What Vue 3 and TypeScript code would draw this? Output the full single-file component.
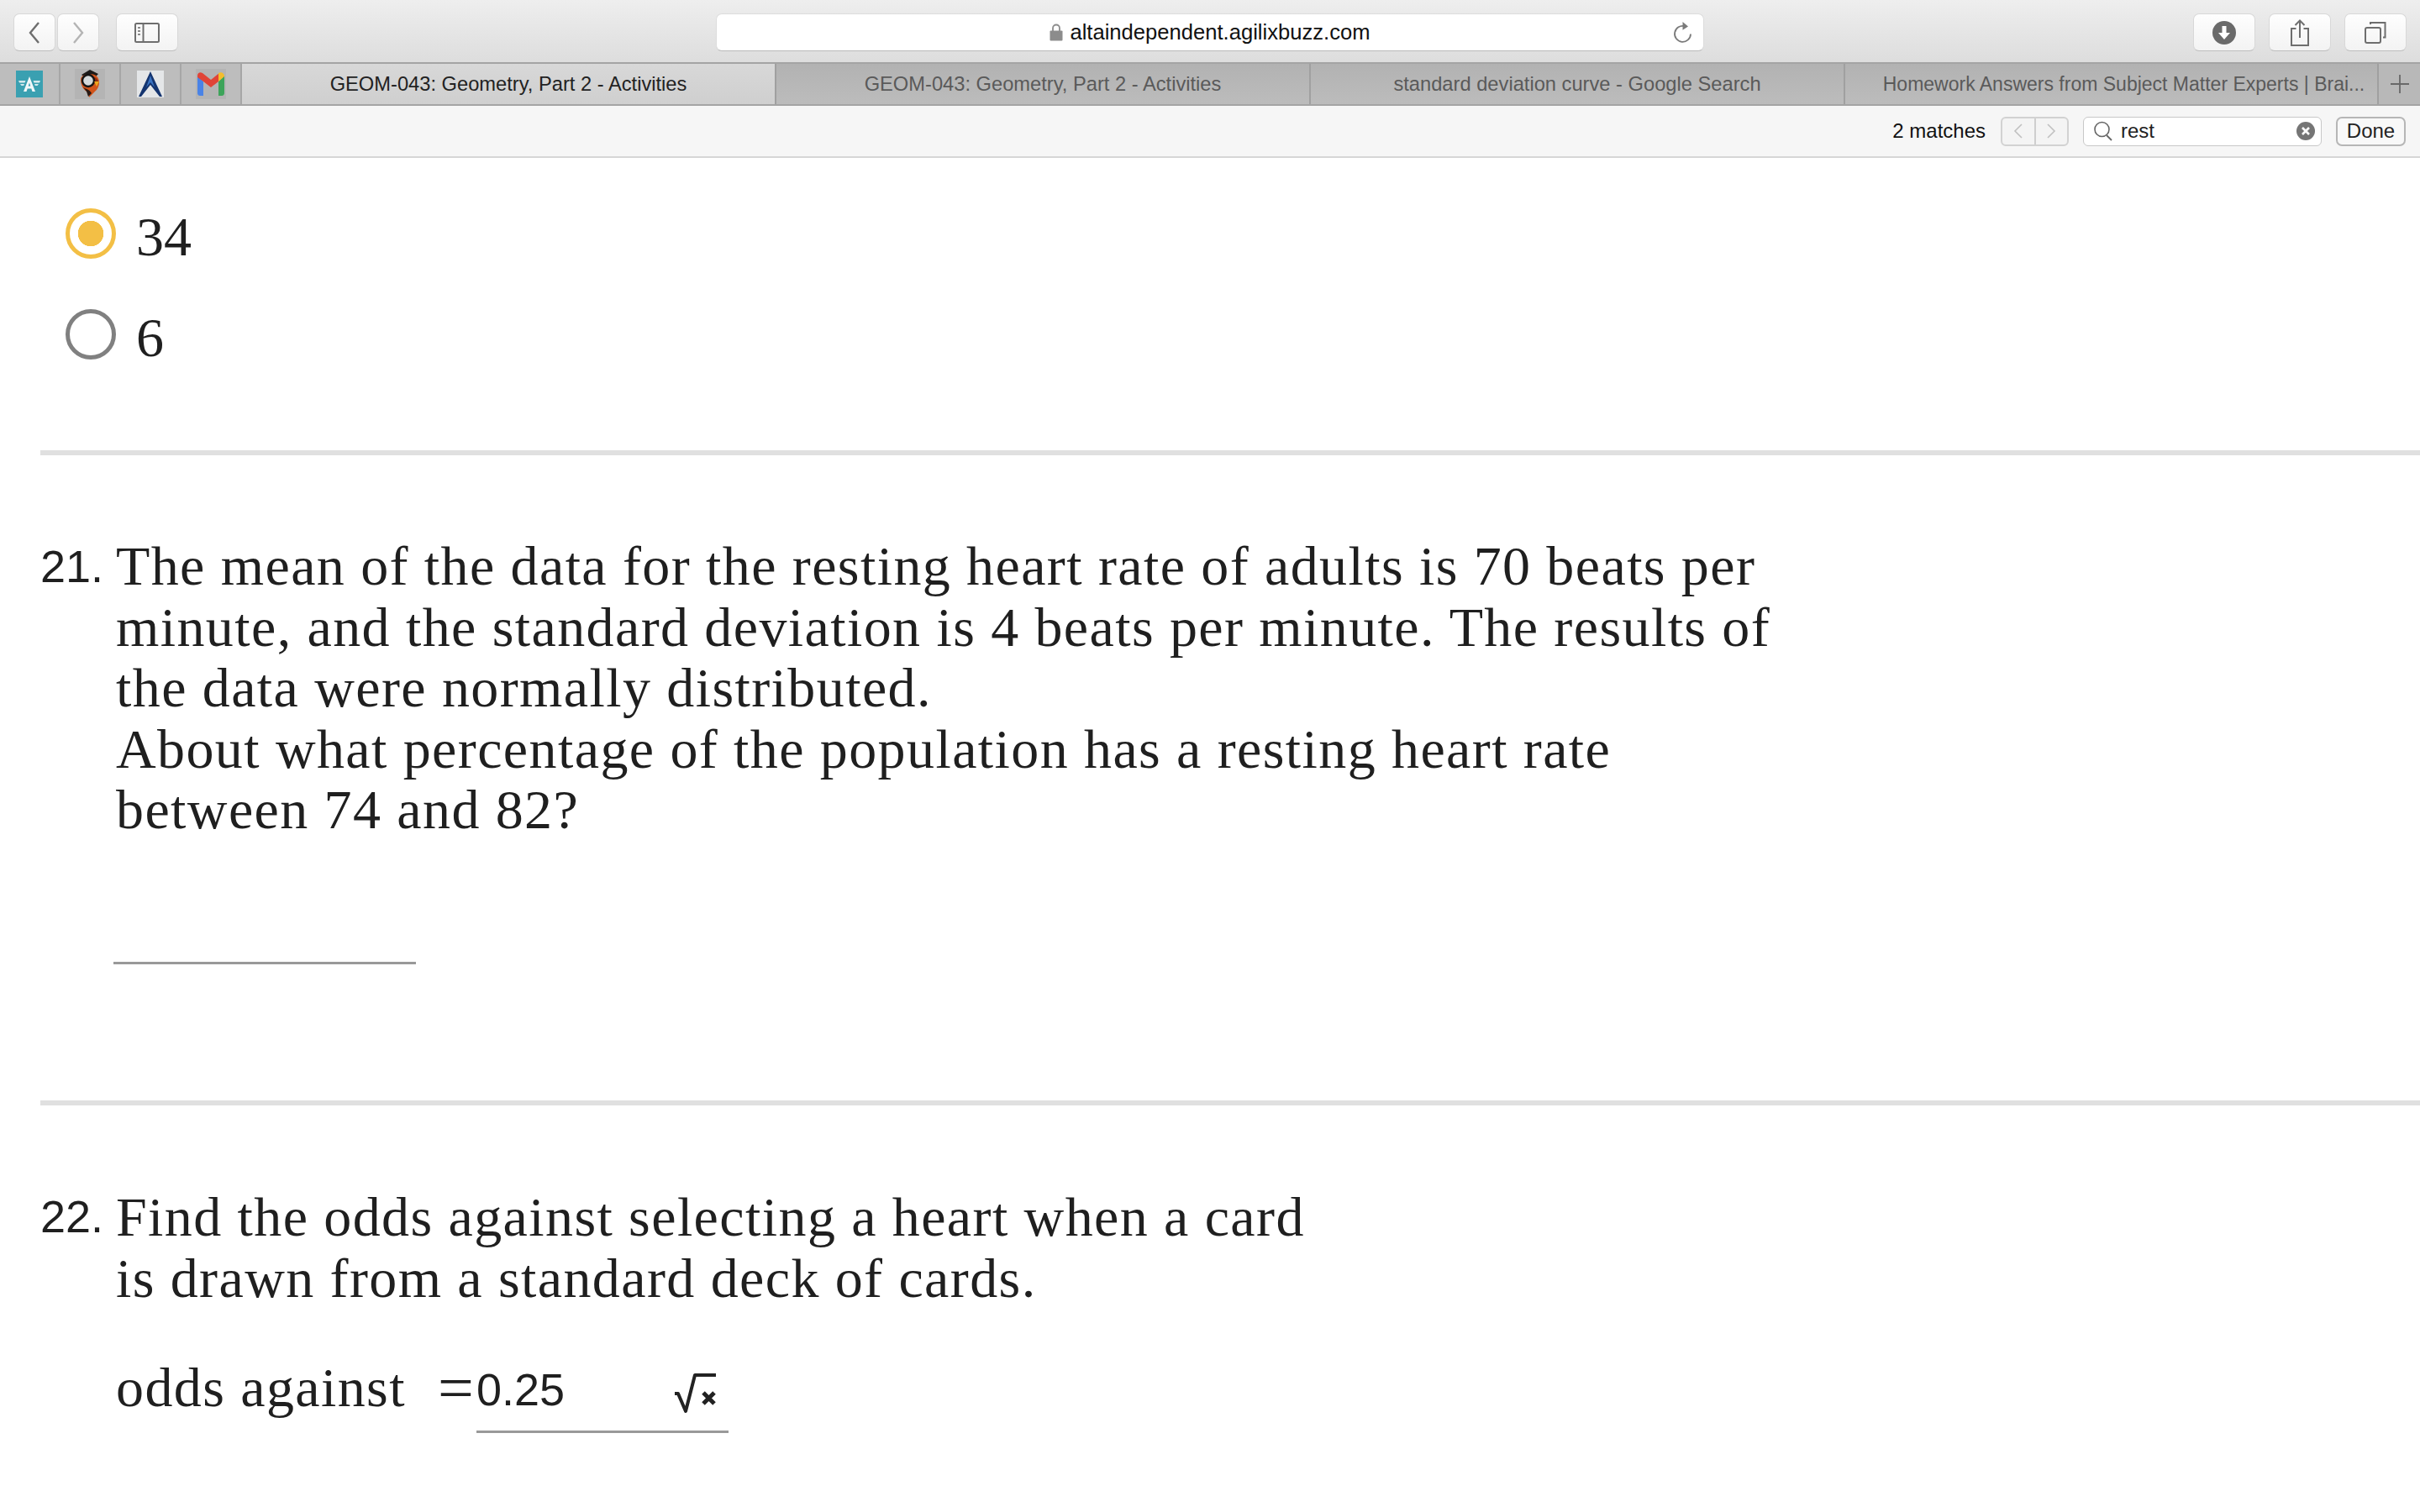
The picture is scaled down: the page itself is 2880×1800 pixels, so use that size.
<script setup lang="ts">
interface Tab {
  title: string
  active?: boolean
}

const tabs: Tab[] = [
  { title: 'GEOM-043: Geometry, Part 2 - Activities', active: true },
  { title: 'GEOM-043: Geometry, Part 2 - Activities' },
  { title: 'standard deviation curve - Google Search' },
  { title: 'Homework Answers from Subject Matter Experts | Brai...' }
]
</script>

<template>
  <div class="page">
    <header class="toolbar">
      <div class="nav-group">
        <button class="tool-btn nav-btn">
          <svg width="16" height="26" viewBox="0 0 16 26"><path d="M13 1 3 13l10 12" fill="none" stroke="#6e6e6e" stroke-width="2.4" /></svg>
        </button>
        <button class="tool-btn nav-btn">
          <svg width="16" height="26" viewBox="0 0 16 26"><path d="M3 1l10 12L3 25" fill="none" stroke="#b4b4b4" stroke-width="2.4" /></svg>
        </button>
      </div>
      <button class="tool-btn sidebar-btn">
        <svg width="30" height="24" viewBox="0 0 30 24">
          <rect x="1" y="1" width="28" height="22" rx="1.5" fill="none" stroke="#6e6e6e" stroke-width="2" />
          <path d="M10.5 1v22" stroke="#6e6e6e" stroke-width="2" />
          <path d="M4 6h3M4 10h3M4 14h3" stroke="#8a8a8a" stroke-width="2" />
        </svg>
      </button>
      <div class="url-bar">
        <div class="url-text">
          <svg width="16" height="21" viewBox="0 0 16 21">
            <path d="M4 9V5.5a4 4 0 0 1 8 0V9" fill="none" stroke="#8c8c8c" stroke-width="1.8" />
            <rect x="0.5" y="8.5" width="15" height="12" rx="1" fill="#8c8c8c" />
          </svg>
          <span>altaindependent.agilixbuzz.com</span>
        </div>
        <svg class="reload" width="24" height="28" viewBox="0 0 24 28">
          <path d="M14 6.2A9.5 9.5 0 1 0 21 15.5" fill="none" stroke="#7a7a7a" stroke-width="1.8" />
          <path d="M11.5 1 18 6.4l-6.5 4.4z" fill="#7a7a7a" />
        </svg>
      </div>
      <div class="right-tools">
        <button class="tool-btn wide-btn">
          <svg width="28" height="28" viewBox="0 0 28 28">
            <circle cx="14" cy="14" r="14" fill="#6a6a6a" />
            <path d="M11.5 6h5v8h4.5L14 22 7 14h4.5z" fill="#fff" />
          </svg>
        </button>
        <button class="tool-btn wide-btn">
          <svg width="24" height="32" viewBox="0 0 24 32">
            <path d="M7.5 11H2v20h20V11h-5.5" fill="none" stroke="#6e6e6e" stroke-width="2" />
            <path d="M12 22V2M6.5 7 12 1.5 17.5 7" fill="none" stroke="#6e6e6e" stroke-width="2" />
          </svg>
        </button>
        <button class="tool-btn wide-btn">
          <svg width="26" height="26" viewBox="0 0 26 26">
            <rect x="1" y="7" width="18" height="18" rx="2" fill="none" stroke="#6e6e6e" stroke-width="2" />
            <path d="M7 3V1h17.5v17.5H22" fill="none" stroke="#6e6e6e" stroke-width="2" />
          </svg>
        </button>
      </div>
    </header>

    <nav class="tabbar">
      <div class="pinned">
        <svg width="32" height="32" viewBox="0 0 32 32">
          <rect width="32" height="32" fill="#3aa0b1" />
          <path d="M16 7 23 25h-3.5l-1.2-3.5h-4.6L12.500 25H9zM14.700 18.500h2.600L16 14.500z" fill="#f2f8f9" />
          <path d="M3 12h8.500l-1 2.500H4zM5 16h5l-.8 2H6.500zM29 12h-8.500l1 2.500H28zM27 16h-5l.8 2h2.700z" fill="#d3e9ed" />
        </svg>
      </div>
      <div class="pinned">
        <div class="fav-tile">
          <svg width="26" height="34" viewBox="0 0 26 34">
            <path d="M3 6 13 0l10 5-4 4H7z" fill="#1d1b1a" />
            <path d="M2 12c0-4 4-7 11-7s11 4 11 10c0 7-4 10-8 14l-4 4-1-6C6 25 2 19 2 12z" fill="#d2541a" />
            <path d="M14 8c5 0 9 3 9 7l-6 1z" fill="#8c2c14" />
            <circle cx="11" cy="13" r="7" fill="#d4d9db" stroke="#151515" stroke-width="2.400" />
            <path d="M18 14h6l-3 6z" fill="#eda71d" />
            <path d="M5 21c4 2 8 3 10 7l-4 4-2-6z" fill="#2a1a14" />
          </svg>
        </div>
      </div>
      <div class="pinned">
        <div class="fav-tile light">
          <svg width="32" height="32" viewBox="0 0 32 32">
            <path d="M16 1 30 31h-3L16 17 5 31H2z" fill="#14346f" />
            <path d="M16 6l5 14-5-6-5 6z" fill="#3a74c4" />
          </svg>
        </div>
      </div>
      <div class="pinned">
        <div class="fav-tile">
          <svg width="32" height="28" viewBox="0 0 32 28">
            <path d="M0 4v21c0 1.500 1 3 3 3h4V11z" fill="#4a83e6" />
            <path d="M32 4v21c0 1.500-1 3-3 3h-4V11z" fill="#3da45a" />
            <path d="M0 4c0-3 3-5 6-3l10 8 10-8-1 10-9 7L7 11 0 6z" fill="#e04437" />
            <path d="M25 1c3-2 7 0 7 4l-7 6z" fill="#f3bd2d" />
          </svg>
        </div>
      </div>
      <div v-for="tab in tabs" :key="tab.title + tab.active" class="tab" :class="{ active: tab.active }">
        <span>{{ tab.title }}</span>
      </div>
      <div class="new-tab">
        <svg width="24" height="24" viewBox="0 0 24 24"><path d="M12 1v22M1 12h22" stroke="#686868" stroke-width="1.800" /></svg>
      </div>
    </nav>

    <div class="findbar">
      <span class="match-count">2 matches</span>
      <div class="find-nav">
        <div class="find-step">
          <svg width="12" height="18" viewBox="0 0 12 18"><path d="M10 1 2 9l8 8" fill="none" stroke="#c0c0c0" stroke-width="1.600" /></svg>
        </div>
        <div class="find-step">
          <svg width="12" height="18" viewBox="0 0 12 18"><path d="M2 1l8 8-8 8" fill="none" stroke="#c0c0c0" stroke-width="1.600" /></svg>
        </div>
      </div>
      <div class="find-input">
        <svg width="22" height="24" viewBox="0 0 22 24">
          <circle cx="9.500" cy="10" r="8.500" fill="none" stroke="#666" stroke-width="1.600" />
          <path d="M15 17l6 6" stroke="#666" stroke-width="1.800" />
        </svg>
        <span class="find-term">rest</span>
        <svg class="find-clear" width="22" height="22" viewBox="0 0 22 22">
          <circle cx="11" cy="11" r="11" fill="#757575" />
          <path d="M7 7l8 8M15 7l-8 8" stroke="#fff" stroke-width="2.600" />
        </svg>
      </div>
      <button class="done-btn">Done</button>
    </div>

    <main class="content">
      <div class="options">
        <div class="option">
          <span class="radio checked"></span>
          <span class="option-label">34</span>
        </div>
        <div class="option">
          <span class="radio"></span>
          <span class="option-label">6</span>
        </div>
      </div>

      <hr class="divider first" />

      <section class="question q21">
        <span class="qnum">21.</span>
        <div class="qbody">
          <p class="qtext">The mean of the data for the resting heart rate of adults is 70 beats per<br />minute, and the standard deviation is 4 beats per minute. The results of<br />the data were normally distributed.<br />About what percentage of the population has a resting heart rate<br />between 74 and 82?</p>
          <div class="blank"></div>
        </div>
      </section>

      <hr class="divider second" />

      <section class="question q22">
        <span class="qnum">22.</span>
        <div class="qbody">
          <p class="qtext">Find the odds against selecting a heart when a card<br />is drawn from a standard deck of cards.</p>
          <div class="answer-row">
            <span class="answer-label">odds against</span>
            <span class="equals">=</span>
            <div class="answer-input">
              <span class="answer-value">0.25</span>
              <svg width="52" height="48" viewBox="0 0 52 48">
                <path d="M2 24h4l9 21L26 2h25" fill="none" stroke="#222" stroke-width="4" stroke-linejoin="round" />
                <path d="M36 23l13 13M49 23 36 36" stroke="#222" stroke-width="5" />
              </svg>
            </div>
          </div>
        </div>
      </section>
    </main>
  </div>
</template>

<style>
html,
body {
  margin: 0;
  background: #fff;
}
</style>

<style scoped>
.page {
  width: 2880px;
  height: 1800px;
  overflow: hidden;
  background: #fff;
  font-family: "Liberation Sans", Arial, sans-serif;
  color: #222;
}

.toolbar {
  height: 74px;
  box-sizing: border-box;
  display: flex;
  align-items: flex-start;
  padding: 16px 16px 0;
  background: linear-gradient(#eeeeee, #dddddd);
}

.tool-btn {
  height: 45px;
  padding: 0;
  display: flex;
  align-items: center;
  justify-content: center;
  background: linear-gradient(#fefefe, #f3f3f3);
  border: 1px solid #d8d8d8;
  border-bottom-color: #bdbdbd;
  border-radius: 7px;
  box-sizing: border-box;
}

.nav-group {
  display: flex;
  gap: 2px;
}

.nav-btn {
  width: 50px;
}

.sidebar-btn {
  width: 74px;
  margin-left: 20px;
}

.url-bar {
  width: 1176px;
  height: 45px;
  margin-left: 640px;
  box-sizing: border-box;
  display: flex;
  align-items: center;
  justify-content: center;
  position: relative;
  background: #fff;
  border: 1px solid #dcdcdc;
  border-bottom-color: #b9b9b9;
  border-radius: 7px;
}

.url-text {
  display: flex;
  align-items: center;
  gap: 8px;
  font-size: 25.6px;
  color: #111;
}

.reload {
  position: absolute;
  right: 12px;
  top: 8px;
}

.right-tools {
  display: flex;
  gap: 16px;
  margin-left: auto;
}

.wide-btn {
  width: 74px;
}

.tabbar {
  height: 52px;
  box-sizing: border-box;
  display: flex;
  background: #b8b8b8;
  border-top: 2px solid #a4a4a4;
  border-bottom: 2px solid #a4a4a4;
}

.pinned {
  width: 72px;
  flex: none;
  box-sizing: border-box;
  display: flex;
  align-items: center;
  justify-content: center;
  border-right: 2px solid #a6a6a6;
  background: #bdbdbd;
}

.fav-tile {
  width: 36px;
  height: 36px;
  display: flex;
  align-items: center;
  justify-content: center;
  background: #b4b4b4;
}

.fav-tile.light {
  background: #e4e6e8;
  width: 32px;
  height: 32px;
}

.tab {
  width: 636px;
  flex: none;
  box-sizing: border-box;
  display: flex;
  align-items: center;
  justify-content: center;
  font-size: 23.7px;
  color: #5a5a5a;
  background: linear-gradient(#b2b2b2, #bcbcbc);
  border-right: 2px solid #a0a0a0;
  white-space: nowrap;
}

.tab:nth-last-child(2) {
  width: 635px;
  padding-left: 30px;
  font-size: 23px;
}

.tab.active {
  color: #222;
  background: linear-gradient(#d8d8d8, #cfcfcf);
}

.new-tab {
  flex: 1;
  display: flex;
  align-items: center;
  justify-content: center;
}

.findbar {
  height: 62px;
  box-sizing: border-box;
  display: flex;
  align-items: center;
  justify-content: flex-end;
  padding: 0 17px 0 0;
  background: #f6f6f6;
  border-bottom: 2px solid #d6d6d6;
}

.match-count {
  font-size: 24px;
  color: #111;
  margin-right: 18px;
}

.find-nav {
  width: 81px;
  height: 35px;
  box-sizing: border-box;
  display: flex;
  border: 2px solid #d2d2d2;
  border-radius: 6px;
  background: #f4f4f4;
}

.find-step {
  flex: 1;
  display: flex;
  align-items: center;
  justify-content: center;
}

.find-step + .find-step {
  border-left: 2px solid #cecece;
}

.find-input {
  width: 284px;
  height: 35px;
  margin-left: 17px;
  box-sizing: border-box;
  display: flex;
  align-items: center;
  padding: 0 7px 0 12px;
  background: #fff;
  border: 1px solid #c8c8c8;
  border-radius: 6px;
}

.find-term {
  margin-left: 10px;
  font-size: 24px;
  color: #222;
}

.find-clear {
  margin-left: auto;
}

.done-btn {
  width: 83px;
  height: 35px;
  margin-left: 17px;
  padding: 0;
  font-family: inherit;
  font-size: 24px;
  color: #222;
  background: #f8f8f8;
  border: 2px solid #b6b6b6;
  border-radius: 7px;
  box-sizing: border-box;
}

.content {
  font-family: "Liberation Serif", "Times New Roman", serif;
  font-size: 66px;
  color: #1f1f1f;
}

.options {
  padding: 60px 0 0 78px;
  display: flex;
  flex-direction: column;
  gap: 60px;
}

.option {
  display: flex;
  align-items: center;
  gap: 24px;
  height: 60px;
}

.radio {
  width: 60px;
  height: 60px;
  box-sizing: border-box;
  flex: none;
  border: 5px solid #808080;
  border-radius: 50%;
}

.radio.checked {
  border-color: #f3bf45;
  background: radial-gradient(circle, #f3bf45 0 15px, #fff 15.500px);
}

.option-label {
  line-height: 60px;
  position: relative;
  top: 4px;
}

.divider {
  margin: 0 0 0 48px;
  height: 6px;
  border: none;
  background: #e0e0e0;
}

.divider.first {
  margin-top: 108px;
}

.question {
  display: grid;
  grid-template-columns: 90px 1fr;
  align-items: start;
  padding-left: 48px;
}

.q21 {
  padding-top: 96px;
}

.q22 {
  padding-top: 96px;
}

.qnum {
  font-family: "Liberation Sans", Arial, sans-serif;
  font-size: 54px;
  line-height: 72px;
}

.qtext {
  margin: 0;
  line-height: 72.5px;
  letter-spacing: 1.4px;
  white-space: nowrap;
}

.q22 .qtext {
  line-height: 73.5px;
}

.blank {
  width: 360px;
  height: 3px;
  margin: 144px 0 0 -3px;
  background: #999;
}

.divider.second {
  margin-top: 162px;
}

.answer-row {
  display: flex;
  align-items: flex-end;
  margin-top: 57px;
}

.answer-label {
  line-height: 72px;
  letter-spacing: 1.4px;
}

.equals {
  margin-left: 38px;
  width: 46px;
  font-size: 76px;
  line-height: 72px;
}

.answer-input {
  width: 300px;
  height: 88px;
  box-sizing: border-box;
  display: flex;
  align-items: flex-start;
  justify-content: space-between;
  padding-right: 14px;
  border-bottom: 3px solid #999;
  margin-bottom: -18px;
}

.answer-value {
  font-family: "Liberation Sans", Arial, sans-serif;
  font-size: 54px;
  line-height: 72px;
}

.answer-input svg {
  margin-top: 17px;
}
</style>
